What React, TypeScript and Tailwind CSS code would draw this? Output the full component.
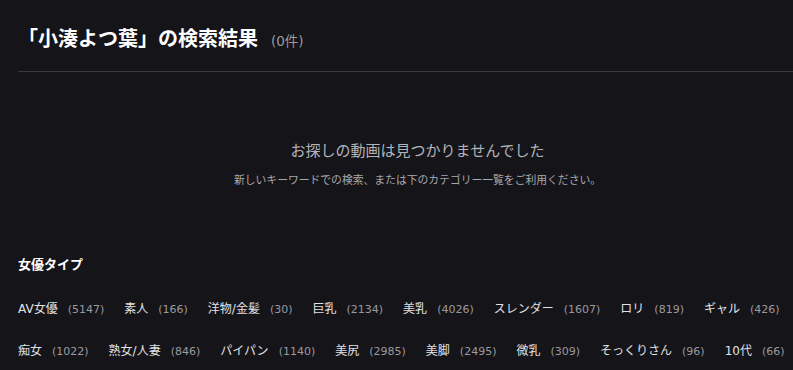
const typeTags = [
  { name: 'AV女優', count: 5147 },
  { name: '素人', count: 166 },
  { name: '洋物/金髪', count: 30 },
  { name: '巨乳', count: 2134 },
  { name: '美乳', count: 4026 },
  { name: 'スレンダー', count: 1607 },
  { name: 'ロリ', count: 819 },
  { name: 'ギャル', count: 426 },
  { name: '痴女', count: 1022 },
  { name: '熟女/人妻', count: 846 },
  { name: 'パイパン', count: 1140 },
  { name: '美尻', count: 2985 },
  { name: '美脚', count: 2495 },
  { name: '微乳', count: 309 },
  { name: 'そっくりさん', count: 96 },
  { name: '10代', count: 66 },
];

export default function App() {
  return (
    <div
      className="min-h-screen bg-[#151419] text-white overflow-hidden"
      style={{ fontFamily: '"DejaVu Sans", "Noto Sans CJK JP", sans-serif' }}
    >
      <div className="w-[817px] pl-[18px]">
        <div className="flex items-baseline gap-[13px] pt-[24px] pb-[17px] border-b border-[#3a393f]">
          <h1 className="text-[20px] font-bold leading-[30px]">「小湊よつ葉」の検索結果</h1>
          <span className="text-[13.5px] text-[#9a9a9f]">(0件)</span>
        </div>

        <div className="flex flex-col items-center pt-[68px]">
          <p className="text-[15px] leading-[22px] text-[#b4b4b8]">お探しの動画は見つかりませんでした</p>
          <p className="text-[10.8px] leading-[16px] text-[#a8a8ac] mt-[11px]">
            新しいキーワードでの検索、または下のカテゴリー一覧をご利用ください。
          </p>
        </div>

        <h2 className="text-[13px] font-bold mt-[66px] leading-[20px]">女優タイプ</h2>

        <div className="flex flex-wrap gap-x-[20px] gap-y-[21px] mt-[24px]">
          {typeTags.map((t) => (
            <div key={t.name} className="flex items-baseline gap-[10px] leading-[20px]">
              <span className="text-[12px] text-[#e2e2e4]">{t.name}</span>
              <span className="text-[11px] text-[#9a9a9f]">({t.count})</span>
            </div>
          ))}
        </div>
      </div>
    </div>
  );
}
